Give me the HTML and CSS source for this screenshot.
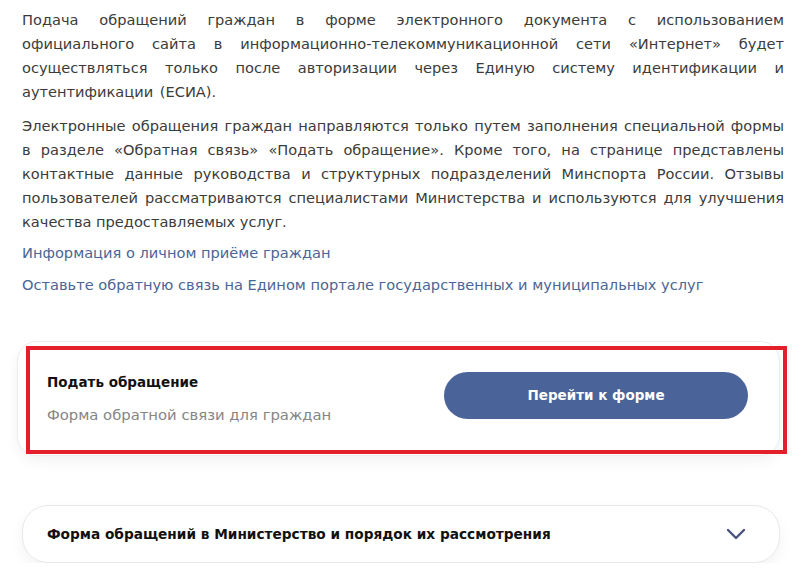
FILE: index.html
```html
<!DOCTYPE html>
<html lang="ru">
<head>
	<meta charset="UTF-8">
	<meta name="viewport" content="width=device-width, initial-scale=1.0">
	<title>Обращения граждан</title>
	<link rel="stylesheet" href="styles.css">
</head>
<body>
	<div class="page">
		<div class="text">
			<p class="wide">Подача обращений граждан в форме электронного документа с использованием официального сайта в информационно-телекоммуникационной сети «Интернет» будет осуществляться только после авторизации через Единую систему идентификации и аутентификации (ЕСИА).</p>
			<p>Электронные обращения граждан направляются только путем заполнения специальной формы в разделе «Обратная связь» «Подать обращение». Кроме того, на странице представлены контактные данные руководства и структурных подразделений Минспорта России. Отзывы пользователей рассматриваются специалистами Министерства и используются для улучшения качества предоставляемых услуг.</p>
		</div>
		<div class="links">
			<a href="#" class="link">Информация о личном приёме граждан</a>
			<a href="#" class="link">Оставьте обратную связь на Едином портале государственных и муниципальных услуг</a>
		</div>

		<div class="card-wrap">
			<div class="card">
				<div class="card-info">
					<div class="card-title">Подать обращение</div>
					<div class="card-sub">Форма обратной связи для граждан</div>
				</div>
				<a href="#" class="btn">Перейти к форме</a>
			</div>
			<div class="mark"></div>
		</div>

		<div class="acc">
			<span class="acc-title">Форма обращений в Министерство и порядок их рассмотрения</span>
			<svg class="chev" width="20" height="12" viewBox="0 0 20 12">
				<path d="M2 2 L10 10 L18 2" fill="none" stroke="#48527e" stroke-width="2.4" stroke-linecap="round" stroke-linejoin="round"/>
			</svg>
		</div>
	</div>
</body>
</html>
```

FILE: styles.css
```css
body{
	margin: 0;
	background: #fff;
	font-family: "DejaVu Sans", "Open Sans", sans-serif;
	color: #3b3b3b;
}
.page{
	padding: 8px 22px 0 22px;
	width: 762px;
}
.text p{
	margin: 0 0 10px 0;
	font-size: 14.6px;
	line-height: 24px;
	text-align: justify;
}
.text p.wide{
	word-spacing: 2px;
}
.text p:last-child{
	margin-bottom: 6px;
}
.links{
	display: flex;
	flex-direction: column;
	gap: 8px;
	padding-top: 1px;
}
.link{
	color: #4b6596;
	text-decoration: none;
	font-size: 14.6px;
	line-height: 24px;
}
.card-wrap{
	position: relative;
	margin: 44px 4px 0 -5px;
}
.card{
	display: flex;
	justify-content: space-between;
	align-items: center;
	background: #fff;
	border: 1px solid #ececec;
	border-radius: 20px;
	box-shadow: 0 6px 14px rgba(0,0,0,0.05);
	padding: 0 31px 0 29px;
	height: 113px;
}
.card-title{
	font-size: 13.5px;
	font-weight: bold;
	color: #111;
	margin-bottom: 16px;
}
.card-sub{
	font-size: 14.8px;
	color: #858585;
}
.btn{
	display: flex;
	align-items: center;
	justify-content: center;
	width: 304px;
	height: 47px;
	border-radius: 24px;
	background: #4a6399;
	color: #fff;
	text-decoration: none;
	font-size: 13.5px;
	font-weight: bold;
	margin-top: -7px;
}
.mark{
	position: absolute;
	left: 9px;
	top: 5px;
	right: -7px;
	bottom: 2px;
	border: 4px solid #e3202a;
	pointer-events: none;
}
.acc{
	margin-top: 49px;
	display: flex;
	justify-content: space-between;
	align-items: center;
	height: 56px;
	border: 1px solid #e8e8e8;
	border-radius: 26px;
	box-shadow: 0 6px 14px rgba(0,0,0,0.05);
	padding: 0 33px 0 24px;
	margin-right: 4px;
}
.acc-title{
	font-size: 13.7px;
	font-weight: bold;
	color: #111;
}
.chev{
	display: block;
}
```
